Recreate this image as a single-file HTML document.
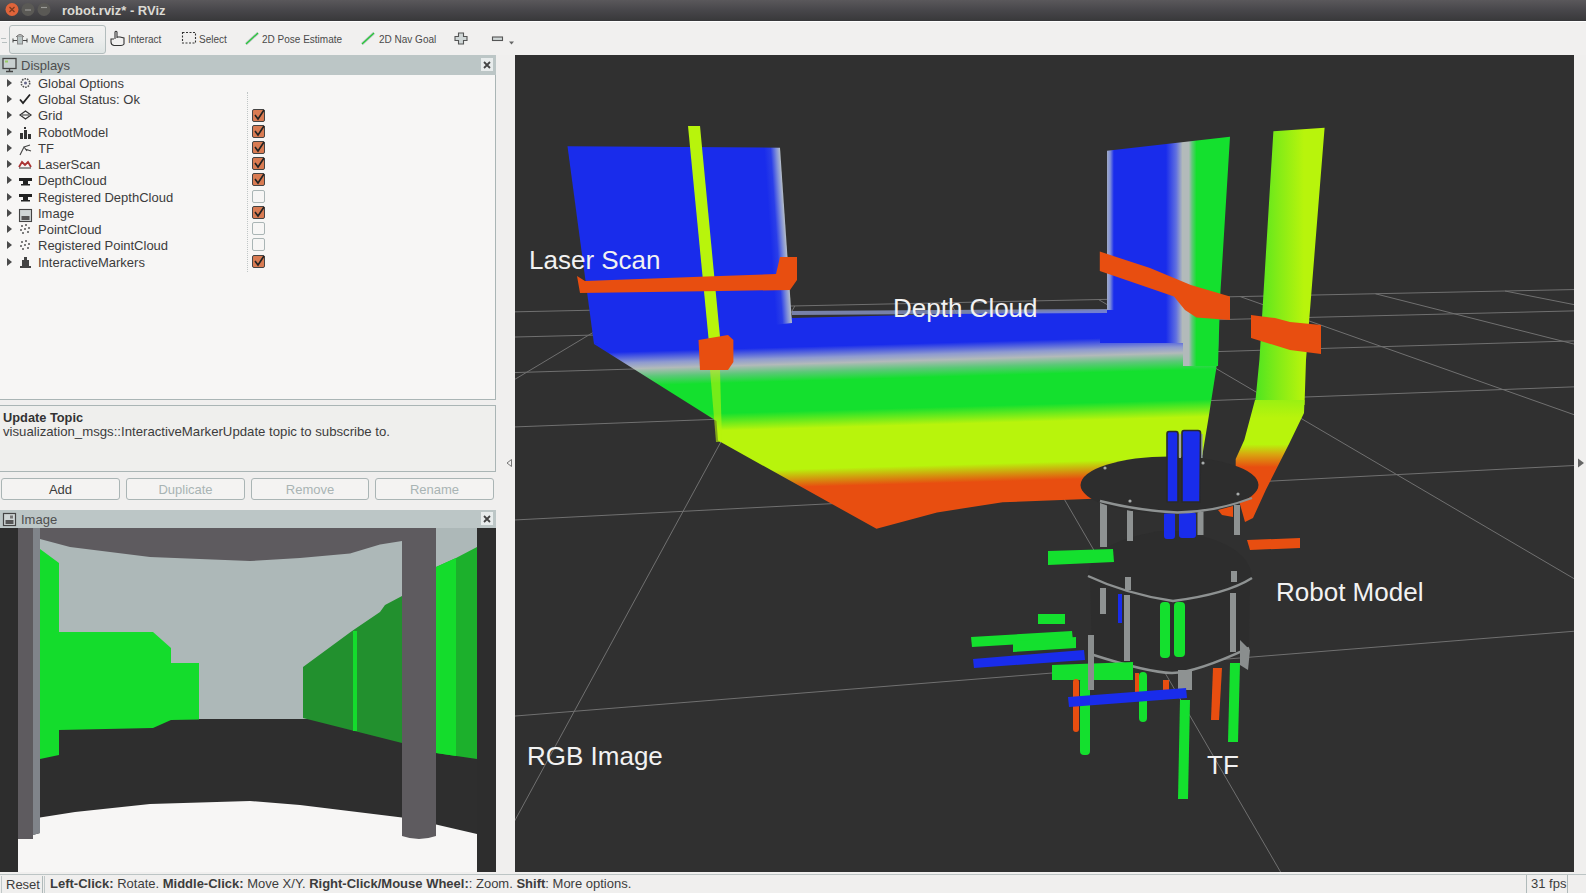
<!DOCTYPE html>
<html><head><meta charset="utf-8">
<style>
*{box-sizing:border-box}
html,body{margin:0;padding:0}
body{width:1586px;height:893px;overflow:hidden;position:relative;background:#f0efee;font-family:"Liberation Sans",sans-serif;color:#3c3c3c}
.a{position:absolute}
#title{left:0;top:0;width:1586px;height:21px;background:linear-gradient(#5a585b,#47464a 50%,#38383a)}
#title .t{left:62px;top:3px;font-size:13px;font-weight:bold;color:#dcdad4;white-space:nowrap}
.wb{width:13px;height:13px;border-radius:50%;top:3px}
#tb{left:0;top:21px;width:1586px;height:34px;background:#f1f0ef;border-top:1px solid #fefefe}
.tt{font-size:10px;color:#4a4a4a;white-space:nowrap;top:12px}
.hdr{background:#bcc6c6;height:20px}
.hdr .ht{left:21px;top:3px;font-size:13px;color:#4e4e4e}
.tree{font-size:13px;color:#3c3c3c;white-space:nowrap}
.row{left:0;height:16px;width:247px}
.row .arr{left:7px;top:4px;width:0;height:0;border-left:5px solid #4a4a4a;border-top:4px solid transparent;border-bottom:4px solid transparent}
.row .lab{left:38px;top:1px}
.cb{left:252px;width:13px;height:13px;border:1px solid #8a9494;border-radius:2px;background:#e25a22}
.cb.off{background:#f7f6f5;border-color:#b5bfbf}
.btn{height:22px;border:1px solid #aab5b5;border-radius:3px;font-size:13px;text-align:center;line-height:21px;background:#f4f3f2}
.lbl{color:#f2f2f2;font-size:25px;white-space:nowrap}
</style></head>
<body>
<!-- title bar -->
<div id="title" class="a">
  <svg class="a" style="left:0;top:0" width="60" height="21">
    <circle cx="12" cy="9.5" r="6.5" fill="#e0643a"/>
    <path d="M9.5,7 L14.5,12 M14.5,7 L9.5,12" stroke="#7a3a20" stroke-width="1.2"/>
    <circle cx="28" cy="9.5" r="6.5" fill="#5a5955"/>
    <path d="M25,10 L31,10" stroke="#9a9a96" stroke-width="1.2"/>
    <circle cx="44" cy="9.5" r="6.5" fill="#5a5955"/>
    <path d="M41,7.5 L47,7.5" stroke="#9a9a96" stroke-width="1.2"/>
  </svg>
  <div class="a t">robot.rviz* - RViz</div>
</div>
<!-- toolbar -->
<div id="tb" class="a">
  <div class="a" style="left:1px;top:16px;width:5px;height:1px;background:#b8c0c0"></div>
  <div class="a" style="left:2px;top:20px;width:5px;height:1px;background:#b8c0c0"></div>
  <div class="a" style="left:9px;top:3px;width:97px;height:29px;border:1px solid #b3bdbd;border-radius:3px;background:linear-gradient(#f2f1f0 0%,#eceeed 50%,#dfe5e4 100%)"></div>
  <svg class="a" style="left:0;top:0" width="520" height="34">
    <!-- move camera icon -->
    <g stroke="#444" stroke-width="1" fill="none">
      <path d="M13,18.5 L27,18.5 M13,16.5 L13,20.5 M27,16.5 L27,20.5"/>
      <path d="M16,15 Q20,10 24,15" stroke="#777"/>
      <rect x="17.5" y="14" width="5" height="8" fill="#b9c4c4" stroke="#888"/>
    </g>
    <!-- interact hand -->
    <g stroke="#333" stroke-width="1.1" fill="none">
      <path d="M115,17 L115,10 Q116,8.5 117,10 L117,16 M117,15 L120,15 L124,16 L124,22 Q123,23.5 121,23.5 L114,23.5 Q111,23 111,20 L111,17 L114,17"/>
    </g>
    <!-- select dashed rect -->
    <rect x="182.5" y="10.5" width="13" height="10.5" stroke="#333" stroke-width="1.1" stroke-dasharray="2,1.5" fill="none"/>
    <!-- pose arrows -->
    <path d="M246,22 L258,11" stroke="#b4bebe" stroke-width="2.6"/>
    <path d="M246,22 L258,11" stroke="#22cc33" stroke-width="1.1"/>
    <path d="M362,22 L374,11" stroke="#b4bebe" stroke-width="2.6"/>
    <path d="M362,22 L374,11" stroke="#22cc33" stroke-width="1.1"/>
    <!-- plus -->
    <path d="M458.5,11 L463.5,11 L463.5,14.5 L467,14.5 L467,18.5 L463.5,18.5 L463.5,22 L458.5,22 L458.5,18.5 L455,18.5 L455,14.5 L458.5,14.5 Z" stroke="#555" stroke-width="1.1" fill="#cfd6d6"/>
    <!-- minus -->
    <rect x="492.5" y="15" width="10" height="3.5" stroke="#555" stroke-width="1.1" fill="#cfd6d6"/>
    <path d="M509,19.5 L514,19.5 L511.5,22.5 Z" fill="#666"/>
  </svg>
  <div class="a tt" style="left:31px">Move Camera</div>
  <div class="a tt" style="left:128px">Interact</div>
  <div class="a tt" style="left:199px">Select</div>
  <div class="a tt" style="left:262px">2D Pose Estimate</div>
  <div class="a tt" style="left:379px">2D Nav Goal</div>
</div>

<!-- Displays panel -->
<div class="a hdr" style="left:0;top:55px;width:496px">
  <svg class="a" style="left:2px;top:2px" width="16" height="16">
    <rect x="1" y="1.5" width="13" height="10" fill="#c8d0d0" stroke="#444" stroke-width="1.3"/>
    <rect x="3" y="3.5" width="3" height="2" fill="#9c6"/>
    <path d="M7.5,12 L7.5,14 M4,14.5 L11,14.5" stroke="#444" stroke-width="1.4"/>
  </svg>
  <div class="a ht">Displays</div>
  <div class="a" style="left:481px;top:3px;width:12px;height:13px;background:#e8ecec"></div>
  <svg class="a" style="left:481px;top:3px" width="12" height="13"><path d="M3,4 L9,10 M9,4 L3,10" stroke="#444" stroke-width="1.8"/></svg>
</div>
<div class="a" style="left:0;top:75px;width:496px;height:325px;background:#f7f6f5;border-right:1px solid #aab5b5;border-bottom:1px solid #aab5b5"></div>
<div class="a" style="left:247px;top:92px;width:1px;height:180px;border-left:1px dotted #c0c6c6"></div>
<div class="a tree" style="left:0;top:75px;width:496px;height:325px">
  <div class="a row" style="top:0px"><div class="a arr"></div><div class="a lab">Global Options</div></div>
  <div class="a row" style="top:16px"><div class="a arr"></div><div class="a lab">Global Status: Ok</div></div>
  <div class="a row" style="top:32px"><div class="a arr"></div><div class="a lab">Grid</div></div>
  <div class="a row" style="top:49px"><div class="a arr"></div><div class="a lab">RobotModel</div></div>
  <div class="a row" style="top:65px"><div class="a arr"></div><div class="a lab">TF</div></div>
  <div class="a row" style="top:81px"><div class="a arr"></div><div class="a lab">LaserScan</div></div>
  <div class="a row" style="top:97px"><div class="a arr"></div><div class="a lab">DepthCloud</div></div>
  <div class="a row" style="top:114px"><div class="a arr"></div><div class="a lab">Registered DepthCloud</div></div>
  <div class="a row" style="top:130px"><div class="a arr"></div><div class="a lab">Image</div></div>
  <div class="a row" style="top:146px"><div class="a arr"></div><div class="a lab">PointCloud</div></div>
  <div class="a row" style="top:162px"><div class="a arr"></div><div class="a lab">Registered PointCloud</div></div>
  <div class="a row" style="top:179px"><div class="a arr"></div><div class="a lab">InteractiveMarkers</div></div>
</div>
<svg class="a" style="left:0;top:75px" width="300" height="200">
  <!-- gear -->
  <g transform="translate(25.5,8)">
    <circle r="4.2" fill="none" stroke="#555" stroke-width="1.6" stroke-dasharray="1.6,1"/>
    <circle r="1.5" fill="#668"/>
  </g>
  <!-- check -->
  <path d="M20,24.5 L23,28 L30,19.5" stroke="#222" stroke-width="1.8" fill="none"/>
  <!-- grid diamond -->
  <path d="M20,40 L25.5,36 L31,40 L25.5,44 Z M22,40 L29,40" stroke="#333" stroke-width="1.2" fill="none"/>
  <!-- robot model -->
  <g fill="#333"><rect x="20" y="58" width="3" height="6"/><rect x="24" y="55" width="3" height="9"/><rect x="28" y="59" width="3" height="5"/><rect x="24" y="52" width="2" height="2"/></g>
  <!-- tf -->
  <path d="M20,80 L24,72 L27,76 M24,72 L30,70 M25,74 L31,76" stroke="#444" stroke-width="1.1" fill="none"/>
  <!-- laser -->
  <path d="M19,92 L22,87 L25,90 L28,87 L31,92" stroke="#a33" stroke-width="1.8" fill="none"/>
  <path d="M19,93 L31,93" stroke="#333" stroke-width="1"/>
  <!-- depth cloud kinect -->
  <g fill="#222"><rect x="19" y="103" width="13" height="3"/><rect x="23" y="106" width="5" height="3"/><rect x="21" y="109" width="9" height="1.5"/></g>
  <g fill="#222"><rect x="19" y="119" width="13" height="3"/><rect x="23" y="122" width="5" height="3"/><rect x="21" y="125" width="9" height="1.5"/></g>
  <!-- image -->
  <rect x="19.5" y="134.5" width="12" height="12" fill="#d0d6d6" stroke="#444" stroke-width="1.1"/>
  <rect x="21.5" y="141" width="8" height="4" fill="#555"/>
  <!-- point clouds -->
  <g fill="#555"><circle cx="22" cy="151" r="1"/><circle cx="26" cy="150" r="1"/><circle cx="29" cy="153" r="1"/><circle cx="21" cy="155" r="1"/><circle cx="25" cy="154" r="1"/><circle cx="28" cy="157" r="1"/><circle cx="23" cy="158" r="1"/></g>
  <g fill="#555"><circle cx="22" cy="167" r="1"/><circle cx="26" cy="166" r="1"/><circle cx="29" cy="169" r="1"/><circle cx="21" cy="171" r="1"/><circle cx="25" cy="170" r="1"/><circle cx="28" cy="173" r="1"/><circle cx="23" cy="174" r="1"/></g>
  <!-- interactive markers -->
  <g fill="#444"><rect x="22" y="185" width="7" height="6"/><rect x="20" y="191" width="11" height="2"/><rect x="24" y="182" width="3" height="3"/></g>
  <!-- checkboxes -->
  <g>
    <rect x="252.5" y="34.5" width="12" height="12" rx="1.5" fill="#d97b52" stroke="#444"/>
    <rect x="252.5" y="50.5" width="12" height="12" rx="1.5" fill="#d97b52" stroke="#444"/>
    <rect x="252.5" y="66.5" width="12" height="12" rx="1.5" fill="#d97b52" stroke="#444"/>
    <rect x="252.5" y="82.5" width="12" height="12" rx="1.5" fill="#d97b52" stroke="#444"/>
    <rect x="252.5" y="98.5" width="12" height="12" rx="1.5" fill="#d97b52" stroke="#444"/>
    <rect x="252.5" y="115.5" width="12" height="12" rx="1.5" fill="#f7f6f5" stroke="#aab5b5"/>
    <rect x="252.5" y="131.5" width="12" height="12" rx="1.5" fill="#d97b52" stroke="#444"/>
    <rect x="252.5" y="147.5" width="12" height="12" rx="1.5" fill="#f7f6f5" stroke="#aab5b5"/>
    <rect x="252.5" y="163.5" width="12" height="12" rx="1.5" fill="#f7f6f5" stroke="#aab5b5"/>
    <rect x="252.5" y="180.5" width="12" height="12" rx="1.5" fill="#d97b52" stroke="#444"/>
    <g stroke="#222" stroke-width="1.6" fill="none">
      <path d="M255,40 L258,44 L264,35"/>
      <path d="M255,56 L258,60 L264,51"/>
      <path d="M255,72 L258,76 L264,67"/>
      <path d="M255,88 L258,92 L264,83"/>
      <path d="M255,104 L258,108 L264,99"/>
      <path d="M255,137 L258,141 L264,132"/>
      <path d="M255,186 L258,190 L264,181"/>
    </g>
  </g>
</svg>

<!-- description -->
<div class="a" style="left:0;top:405px;width:496px;height:67px;background:#efefed;border:1px solid #aab5b5;border-left:none"></div>
<div class="a" style="left:3px;top:410px;font-size:12.8px;font-weight:bold;color:#333">Update Topic</div>
<div class="a" style="left:3px;top:424px;font-size:13.2px;color:#3c3c3c;white-space:nowrap">visualization_msgs::InteractiveMarkerUpdate topic to subscribe to.</div>

<!-- buttons -->
<div class="a btn" style="left:1px;top:478px;width:119px;color:#3c3c3c">Add</div>
<div class="a btn" style="left:126px;top:478px;width:119px;color:#a9b4b4">Duplicate</div>
<div class="a btn" style="left:251px;top:478px;width:118px;color:#a9b4b4">Remove</div>
<div class="a btn" style="left:375px;top:478px;width:119px;color:#a9b4b4">Rename</div>
<!-- splitter arrows -->
<svg class="a" style="left:505px;top:458px" width="8" height="10"><path d="M6.5,1.5 L6.5,8.5 L2,5 Z" fill="none" stroke="#777" stroke-width="1"/></svg>
<svg class="a" style="left:1576px;top:457px" width="10" height="12"><path d="M2,1.5 L2,10.5 L8,6 Z" fill="#666"/></svg>

<!-- Image panel -->
<div class="a hdr" style="left:0;top:510px;width:496px;height:18px">
  <svg class="a" style="left:2px;top:2px" width="16" height="15">
    <rect x="1.5" y="1.5" width="12" height="12" fill="#d0d6d6" stroke="#444" stroke-width="1.2"/>
    <rect x="3.5" y="8" width="8" height="4" fill="#555"/>
    <rect x="8" y="3.5" width="3" height="3" fill="#777"/>
  </svg>
  <div class="a ht" style="top:2px">Image</div>
  <div class="a" style="left:481px;top:2px;width:12px;height:13px;background:#e8ecec"></div>
  <svg class="a" style="left:481px;top:2px" width="12" height="13"><path d="M3,4 L9,10 M9,4 L3,10" stroke="#444" stroke-width="1.8"/></svg>
</div>
<svg class="a" style="left:0;top:528px" width="496" height="344" viewBox="0 528 496 344">
  <rect x="0" y="528" width="496" height="344" fill="#2e2e2e"/>
  <rect x="18" y="528" width="459" height="191" fill="#adb8b8"/>
  <path d="M18,528 L436,528 L436,541 L402,541 L380,544.6 L350,553.6 L300,558 L250,561 L150,557 L70,547 L40,539 L18,535 Z" fill="#5e5b5f"/>
  <path d="M40,549 L59,563 L59,632 L153,632 L171,648 L171,663 L199,663 L199,719.6 L171,720 L153,728 L59,730 L59,755 L40,759 Z" fill="#14dc2c"/>
  <path d="M303,667 L352,631 L380,612 L385,605 L402,596 L402,743 L303,718 Z" fill="#22902e"/>
  <rect x="353" y="631" width="4" height="100" fill="#14dc2c"/>
  <path d="M436,567 L456,558 L477,547 L477,759 L436,753 Z" fill="#1cb02c"/>
  <path d="M436,567 L456,558 L456,756 L436,753 Z" fill="#14dc2c"/>
  <path d="M18,839 L40,833 L40,817.6 L75,812 L150,804 L250,801 L300,805 L402,817.6 L436,824.5 L477,834 L477,872 L18,872 Z" fill="#f7f6f5"/>
  <rect x="18" y="528" width="15" height="311" fill="#5e5b5f"/>
  <path d="M33,528 L40,528 L40,833 L33,835 Z" fill="#80848a"/>
  <path d="M402,528 L436,528 L436,836 Q419,842 402,836 Z" fill="#5e5b5f"/>
  <rect x="0" y="528" width="18" height="344" fill="#2d2d2d"/>
  <rect x="477" y="528" width="19" height="344" fill="#2d2d2d"/>
</svg>

<!-- 3D view -->
<!--V3D-->
<svg class="a" style="left:515px;top:55px" width="1059" height="817" viewBox="515 55 1059 817">
  <defs>
    <linearGradient id="fl" gradientUnits="userSpaceOnUse" x1="900" y1="300" x2="906.6" y2="530">
      <stop offset="0" stop-color="#192ceb"/>
      <stop offset="0.191" stop-color="#192ceb"/>
      <stop offset="0.239" stop-color="#8e9ad0"/>
      <stop offset="0.265" stop-color="#b2baba"/>
      <stop offset="0.30" stop-color="#5cc878"/>
      <stop offset="0.339" stop-color="#14e02e"/>
      <stop offset="0.470" stop-color="#14e02e"/>
      <stop offset="0.545" stop-color="#b8f40c"/>
      <stop offset="0.722" stop-color="#b8f40c"/>
      <stop offset="0.800" stop-color="#e84e10"/>
      <stop offset="1" stop-color="#e84e10"/>
    </linearGradient>
    <linearGradient id="lw" gradientUnits="userSpaceOnUse" x1="764" y1="147" x2="780" y2="145.9">
      <stop offset="0" stop-color="#192ceb"/>
      <stop offset="0.4" stop-color="#2a3ee8"/>
      <stop offset="0.75" stop-color="#8090d8"/>
      <stop offset="1" stop-color="#b8c0c8"/>
    </linearGradient>
    <linearGradient id="rw" gradientUnits="userSpaceOnUse" x1="1105" y1="0" x2="1232" y2="0">
      <stop offset="0" stop-color="#b2baba"/>
      <stop offset="0.04" stop-color="#8090d8"/>
      <stop offset="0.07" stop-color="#192ceb"/>
      <stop offset="0.48" stop-color="#192ceb"/>
      <stop offset="0.56" stop-color="#6070e0"/>
      <stop offset="0.61" stop-color="#b2baba"/>
      <stop offset="0.66" stop-color="#b2baba"/>
      <stop offset="0.685" stop-color="#60c878"/>
      <stop offset="0.72" stop-color="#14e02e"/>
      <stop offset="1" stop-color="#14e02e"/>
    </linearGradient>
    <linearGradient id="yp" gradientUnits="userSpaceOnUse" x1="1255" y1="0" x2="1325" y2="0">
      <stop offset="0" stop-color="#4ee520"/>
      <stop offset="0.35" stop-color="#86ec16"/>
      <stop offset="0.7" stop-color="#b8f40c"/>
      <stop offset="1" stop-color="#b8f40c"/>
    </linearGradient>
    <linearGradient id="ypl" gradientUnits="userSpaceOnUse" x1="0" y1="400" x2="0" y2="520">
      <stop offset="0" stop-color="#9af012"/>
      <stop offset="0.15" stop-color="#b8f40c"/>
      <stop offset="0.37" stop-color="#b8f40c"/>
      <stop offset="0.45" stop-color="#d8a810"/>
      <stop offset="0.56" stop-color="#e84e10"/>
      <stop offset="1" stop-color="#e84e10"/>
    </linearGradient>
    <linearGradient id="ypo" gradientUnits="userSpaceOnUse" x1="0" y1="440" x2="0" y2="470">
      <stop offset="0" stop-color="#b8f40c" stop-opacity="0"/>
      <stop offset="0.5" stop-color="#d0a010" stop-opacity="0.7"/>
      <stop offset="1" stop-color="#e84e10"/>
    </linearGradient>
  </defs>
  <rect x="515" y="55" width="1059" height="817" fill="#303030"/>
  <g id="grid" stroke="#707070" stroke-width="1" fill="none">
    <path d="M-5502.0,1197.7 L3496.0,477.4 M-2167.1,657.8 L2844.9,400.2 M-1123.4,488.9 L2452.6,353.6 M-613.5,406.3 L2190.3,322.5 M-311.2,357.4 L2002.7,300.3 M-111.2,325.0 L1861.8,283.5 M-26644.9,4620.3 L-111.2,325.0 M-11818.3,2679.1 L89.5,320.8 M-5994.9,1916.7 L279.6,316.8 M-2884.0,1509.4 L460.1,313.0 M-948.5,1256.0 L631.6,309.4 M372.0,1083.1 L794.8,306.0 M1330.3,957.7 L950.3,302.7 M2057.6,862.5 L1098.6,299.6 M2628.4,787.7 L1240.2,296.6 M3088.2,727.5 L1375.5,293.8 M3466.6,678.0 L1505.0,291.0 M3783.5,636.5 L1628.9,288.4 M4052.7,601.3 L1747.8,285.9 M4284.2,570.9 L1861.8,283.5"/>
  </g>
  <!-- depth floor -->
  <path d="M594,344 L716.5,421 L718,440.5 L876.5,528.8 L937,512.4 L1002.6,502.3 L1100,498.5 L1180,490 L1202.4,455 L1209,415 L1217.6,360 L1220,299 L1107,310 L792,318 L783,300 Z" fill="url(#fl)"/>
  <!-- left wall -->
  <path d="M567.5,146.2 L780,147.7 L792,323 L594,344 Z" fill="url(#lw)"/>
  <!-- right wall -->
  <path d="M1107,150.8 L1230,136.8 L1220,299 L1218,366 L1183,366 L1183,343 L1107,343 Z" fill="url(#rw)"/>
  <path d="M1100,310 L1125,310 L1125,343 L1100,343 Z" fill="#192ceb"/>
  <path d="M792,311 L1107,309 L1107,313 L792,315 Z" fill="#8a96c8" opacity="0.8"/>
  <!-- right yellow pillar -->
  <path d="M1273.4,131.2 L1324.6,127.8 L1306,360 L1304.5,405 L1255,405 L1259.4,360 Z" fill="url(#yp)"/>
  <path d="M1255,400 L1304.5,400 L1304,413 L1289,444 L1266,489.5 L1253,518 L1245,522 L1236,490 L1235.7,467.6 L1235.7,459 L1244.3,440 Z" fill="url(#ypl)"/>
    <path d="M1218,510 L1233,506 L1233,517 L1222,515 Z" fill="#e84e10"/>
  <!-- left pole -->
  <path d="M688,126 L700,126 L720.3,340 L708.7,340 Z" fill="#b8f40c"/>
  <path d="M710,370 L720,370 L722,442 L716,442 Z" fill="#b8f40c" opacity="0.6"/>
  <!-- laser scan orange -->
  <g fill="#e84e10">
    <path d="M577,276 L585,281 L720,276 L776,274 L780,257 L797,257 L797,280 L790,290 L720,291 L580,293 Z"/>
    <path d="M698.5,340 L728,335 L733.4,340 L733.4,362 L728,370 L700,370 Z"/>
    <path d="M1099.8,251.6 L1150,268 L1190.8,285 L1230,296.4 L1230,320 L1196.4,317.4 L1185,310 L1174,296.4 L1099.8,271 Z"/>
    <path d="M1251,315 L1275,318 L1290,322 L1321,325 L1321,354 L1290,350 L1251,338 Z"/>
  </g>
  <!-- robot -->
  <g id="robot">
    <!-- lower plate -->
    <path d="M1092,654 Q1148,672.5 1172,673 Q1196,672.5 1249,648 L1250,575 L1090,575 Z" fill="#2d2d2d"/>
    <path d="M1092,654.5 Q1148,672.5 1172,673 Q1196,672.5 1249,647.8" stroke="#8e9292" stroke-width="2.4" fill="none"/>
    <rect x="1178" y="670" width="14" height="20" fill="#8e9292"/>
    <g fill="#8e9292">
      <rect x="1100" y="588" width="6" height="26"/>
      <rect x="1124" y="595" width="6" height="66"/>
      <rect x="1230" y="593" width="6" height="59"/>
    </g>
    <rect x="1118" y="594" width="4" height="29" fill="#192ceb"/>
    <rect x="1160" y="602" width="10" height="56" rx="4" fill="#14e02e"/>
    <rect x="1174" y="602" width="11" height="55" rx="4" fill="#14e02e"/>
    <!-- middle plate -->
    <path d="M1088,576 Q1126,594 1173,601 Q1227,594 1252,578 Q1250,540 1168,530 Q1090,540 1088,576 Z" fill="#2d2d2d"/>
    <path d="M1088,576 Q1126,594 1173,601 Q1227,594 1252,578" stroke="#8e9292" stroke-width="2.4" fill="none"/>
    <g fill="#8e9292">
      <rect x="1125" y="577" width="6" height="13"/>
      <rect x="1231" y="571" width="6" height="11"/>
    </g>
    <!-- posts under top plate -->
    <g fill="#8e9292">
      <rect x="1100" y="502" width="7" height="45"/>
      <rect x="1127" y="508" width="6" height="33"/>
      <rect x="1197.5" y="511" width="6" height="24"/>
      <rect x="1234" y="505" width="6" height="30"/>
    </g>
    <rect x="1164" y="512" width="11" height="27" rx="3" fill="#192ceb"/>
    <rect x="1179" y="512" width="17" height="26" rx="3" fill="#192ceb"/>
    <!-- top plate -->
    <ellipse cx="1169.5" cy="485" rx="89" ry="28.6" fill="#2d2d2d"/>
    <g fill="#a8acac"><circle cx="1105" cy="468" r="1.6"/><circle cx="1130" cy="501" r="1.6"/><circle cx="1203" cy="463" r="1.6"/><circle cx="1238" cy="494" r="1.6"/></g>
    <path d="M1100,501 Q1140,511 1177.5,512.5 Q1215,512 1252,498" stroke="#8e9292" stroke-width="2.4" fill="none"/>
    <rect x="1178.5" y="434" width="2.5" height="24" fill="#a0a6a6"/>
    <rect x="1201" y="434" width="1.6" height="24" fill="#90a0a0"/>
    <path d="M1167,434 Q1167,431.5 1169,431.5 L1176,431.5 Q1178,431.5 1178,434 L1178,502 L1167,502 Z" fill="#192ceb" stroke="#2a2a2a" stroke-width="1.6"/>
    <path d="M1182,433 Q1182,430.5 1184,430.5 L1198,430.5 Q1200.5,430.5 1200.5,433 L1200,502 L1182,502 Z" fill="#192ceb" stroke="#2a2a2a" stroke-width="1.6"/>
    <!-- TF axes -->
    <g>
      <path d="M971,637 L1072,631 L1073,641 L972,647 Z" fill="#14e02e"/>
      <path d="M1013,641 L1076,637 L1076,648 L1013,652 Z" fill="#14e02e"/>
      <path d="M1038,614 L1065,614 L1065,624 L1038,624 Z" fill="#14e02e"/>
      <path d="M1048,551 L1113,549 L1114,562 L1048,565 Z" fill="#14e02e"/>
      <path d="M1247,540 L1300,538 L1300,548 L1250,550 Z" fill="#e84e10"/>
      <path d="M973,659 L1084,650 L1085,660 L974,668 Z" fill="#192ceb"/>
      <path d="M1052,665 L1133,662 L1133,680 L1052,680 Z" fill="#14e02e"/>
      <rect x="1080" y="677" width="10" height="78" rx="4" fill="#14e02e"/>
      <rect x="1073" y="679" width="6" height="53" rx="3" fill="#e84e10"/>
      <rect x="1139" y="672" width="8" height="50" rx="4" fill="#14e02e"/>
      <rect x="1135" y="673" width="4" height="20" fill="#e84e10"/>
      <rect x="1163" y="680" width="6" height="15" fill="#e84e10"/>
      <path d="M1068,697 L1186,688 L1187,698 L1069,707 Z" fill="#192ceb"/>
      <path d="M1180,700 L1190,700 L1188,799 L1178,799 Z" fill="#14e02e"/>
      <path d="M1213,668 L1222,668 L1219,720 L1211,720 Z" fill="#e84e10"/>
      <path d="M1230,663 L1240,663 L1238,742 L1228,742 Z" fill="#14e02e"/>
      <rect x="1088" y="635" width="6" height="55" fill="#8a8e8e"/>
      <path d="M1240,640 L1250,650 L1248,670 L1240,665 Z" fill="#8a8e8e"/>
    </g>
  </g>
  <!-- labels -->
  <g font-family="Liberation Sans, sans-serif" font-size="26" fill="#f2f2f2">
    <text x="529" y="268.5">Laser Scan</text>
    <text x="893" y="316.6">Depth Cloud</text>
    <text x="1276" y="601">Robot Model</text>
    <text x="527" y="764.5">RGB Image</text>
    <text x="1207" y="773.5">TF</text>
  </g>
</svg>
<!--/V3D-->

<!-- status bar -->
<div class="a" style="left:0;top:874px;width:1586px;height:1px;background:#bcc4c4"></div>
<div class="a" style="left:1px;top:876px;width:1px;height:17px;background:#c0c8c8"></div>
<div class="a" style="left:42px;top:876px;width:1px;height:17px;background:#b0baba"></div>
<div class="a" style="left:44px;top:876px;width:1px;height:17px;background:#c0c8c8"></div>
<div class="a" style="left:6px;top:877px;font-size:13px;color:#3c3c3c">Reset</div>
<div class="a" style="left:50px;top:876px;font-size:13px;color:#3c3c3c;white-space:nowrap"><b>Left-Click:</b> Rotate. <b>Middle-Click:</b> Move X/Y. <b>Right-Click/Mouse Wheel:</b>: Zoom. <b>Shift</b>: More options.</div>
<div class="a" style="left:1526px;top:875px;width:1px;height:18px;background:#b0baba"></div>
<div class="a" style="left:1567px;top:875px;width:1px;height:18px;background:#b0baba"></div>
<div class="a" style="left:1531px;top:876px;font-size:13px;color:#3c3c3c">31 fps</div>
</body></html>
